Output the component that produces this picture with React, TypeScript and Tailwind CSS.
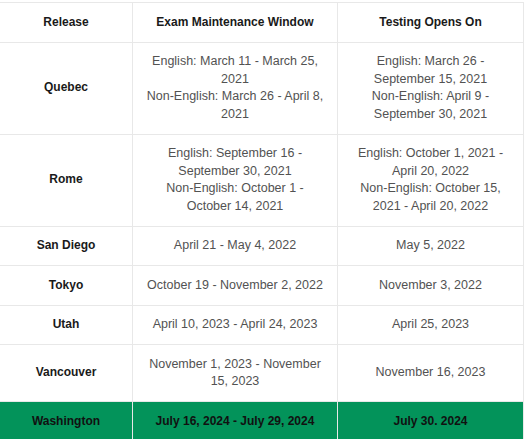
import React from "react";

type Row = {
  release: string;
  window: string[];
  opens: string[];
  current?: boolean;
};

const rows: Row[] = [
  {
    release: "Quebec",
    window: [
      "English: March 11 - March 25,",
      "2021",
      "Non-English: March 26 - April 8,",
      "2021",
    ],
    opens: [
      "English: March 26 -",
      "September 15, 2021",
      "Non-English: April 9 -",
      "September 30, 2021",
    ],
  },
  {
    release: "Rome",
    window: [
      "English: September 16 -",
      "September 30, 2021",
      "Non-English: October 1 -",
      "October 14, 2021",
    ],
    opens: [
      "English: October 1, 2021 -",
      "April 20, 2022",
      "Non-English: October 15,",
      "2021 - April 20, 2022",
    ],
  },
  { release: "San Diego", window: ["April 21 - May 4, 2022"], opens: ["May 5, 2022"] },
  { release: "Tokyo", window: ["October 19 - November 2, 2022"], opens: ["November 3, 2022"] },
  { release: "Utah", window: ["April 10, 2023 - April 24, 2023"], opens: ["April 25, 2023"] },
  {
    release: "Vancouver",
    window: ["November 1, 2023 - November", "15, 2023"],
    opens: ["November 16, 2023"],
  },
  {
    release: "Washington",
    window: ["July 16, 2024 - July 29, 2024"],
    opens: ["July 30. 2024"],
    current: true,
  },
];

const Lines: React.FC<{ lines: string[] }> = ({ lines }) => (
  <>
    {lines.map((l, i) => (
      <React.Fragment key={i}>
        {i > 0 && <br />}
        {l}
      </React.Fragment>
    ))}
  </>
);

const App: React.FC = () => {
  const cell = "border border-[#e8e8e8] px-2 py-[10.5px] text-center align-middle";
  return (
    <div className="min-h-screen bg-white pt-[2px] font-['Liberation_Sans',Arial,sans-serif] text-[12.5px] leading-[17.5px]">
      <table className="w-[524px] table-fixed border-collapse -ml-px">
        <colgroup>
          <col className="w-[133px]" />
          <col className="w-[205px]" />
          <col className="w-[186px]" />
        </colgroup>
        <thead>
          <tr className="text-[#1a1a1a] text-[12px]">
            <th className={`${cell} font-bold`}>Release</th>
            <th className={`${cell} font-bold`}>Exam Maintenance Window</th>
            <th className={`${cell} font-bold`}>Testing Opens On</th>
          </tr>
        </thead>
        <tbody>
          {rows.map((r) =>
            r.current ? (
              <tr key={r.release} className="bg-[#03935a] font-bold text-[#111] text-[12px]">
                <td className={`${cell} border-[#d4e6dc]`}>{r.release}</td>
                <td className={`${cell} border-[#d4e6dc]`}>
                  <Lines lines={r.window} />
                </td>
                <td className={`${cell} border-[#d4e6dc]`}>
                  <Lines lines={r.opens} />
                </td>
              </tr>
            ) : (
              <tr key={r.release}>
                <td className={`${cell} font-bold text-[12px] text-[#1a1a1a]`}>{r.release}</td>
                <td className={`${cell} text-[#525252]`}>
                  <Lines lines={r.window} />
                </td>
                <td className={`${cell} text-[#525252]`}>
                  <Lines lines={r.opens} />
                </td>
              </tr>
            )
          )}
        </tbody>
      </table>
    </div>
  );
};

export default App;
